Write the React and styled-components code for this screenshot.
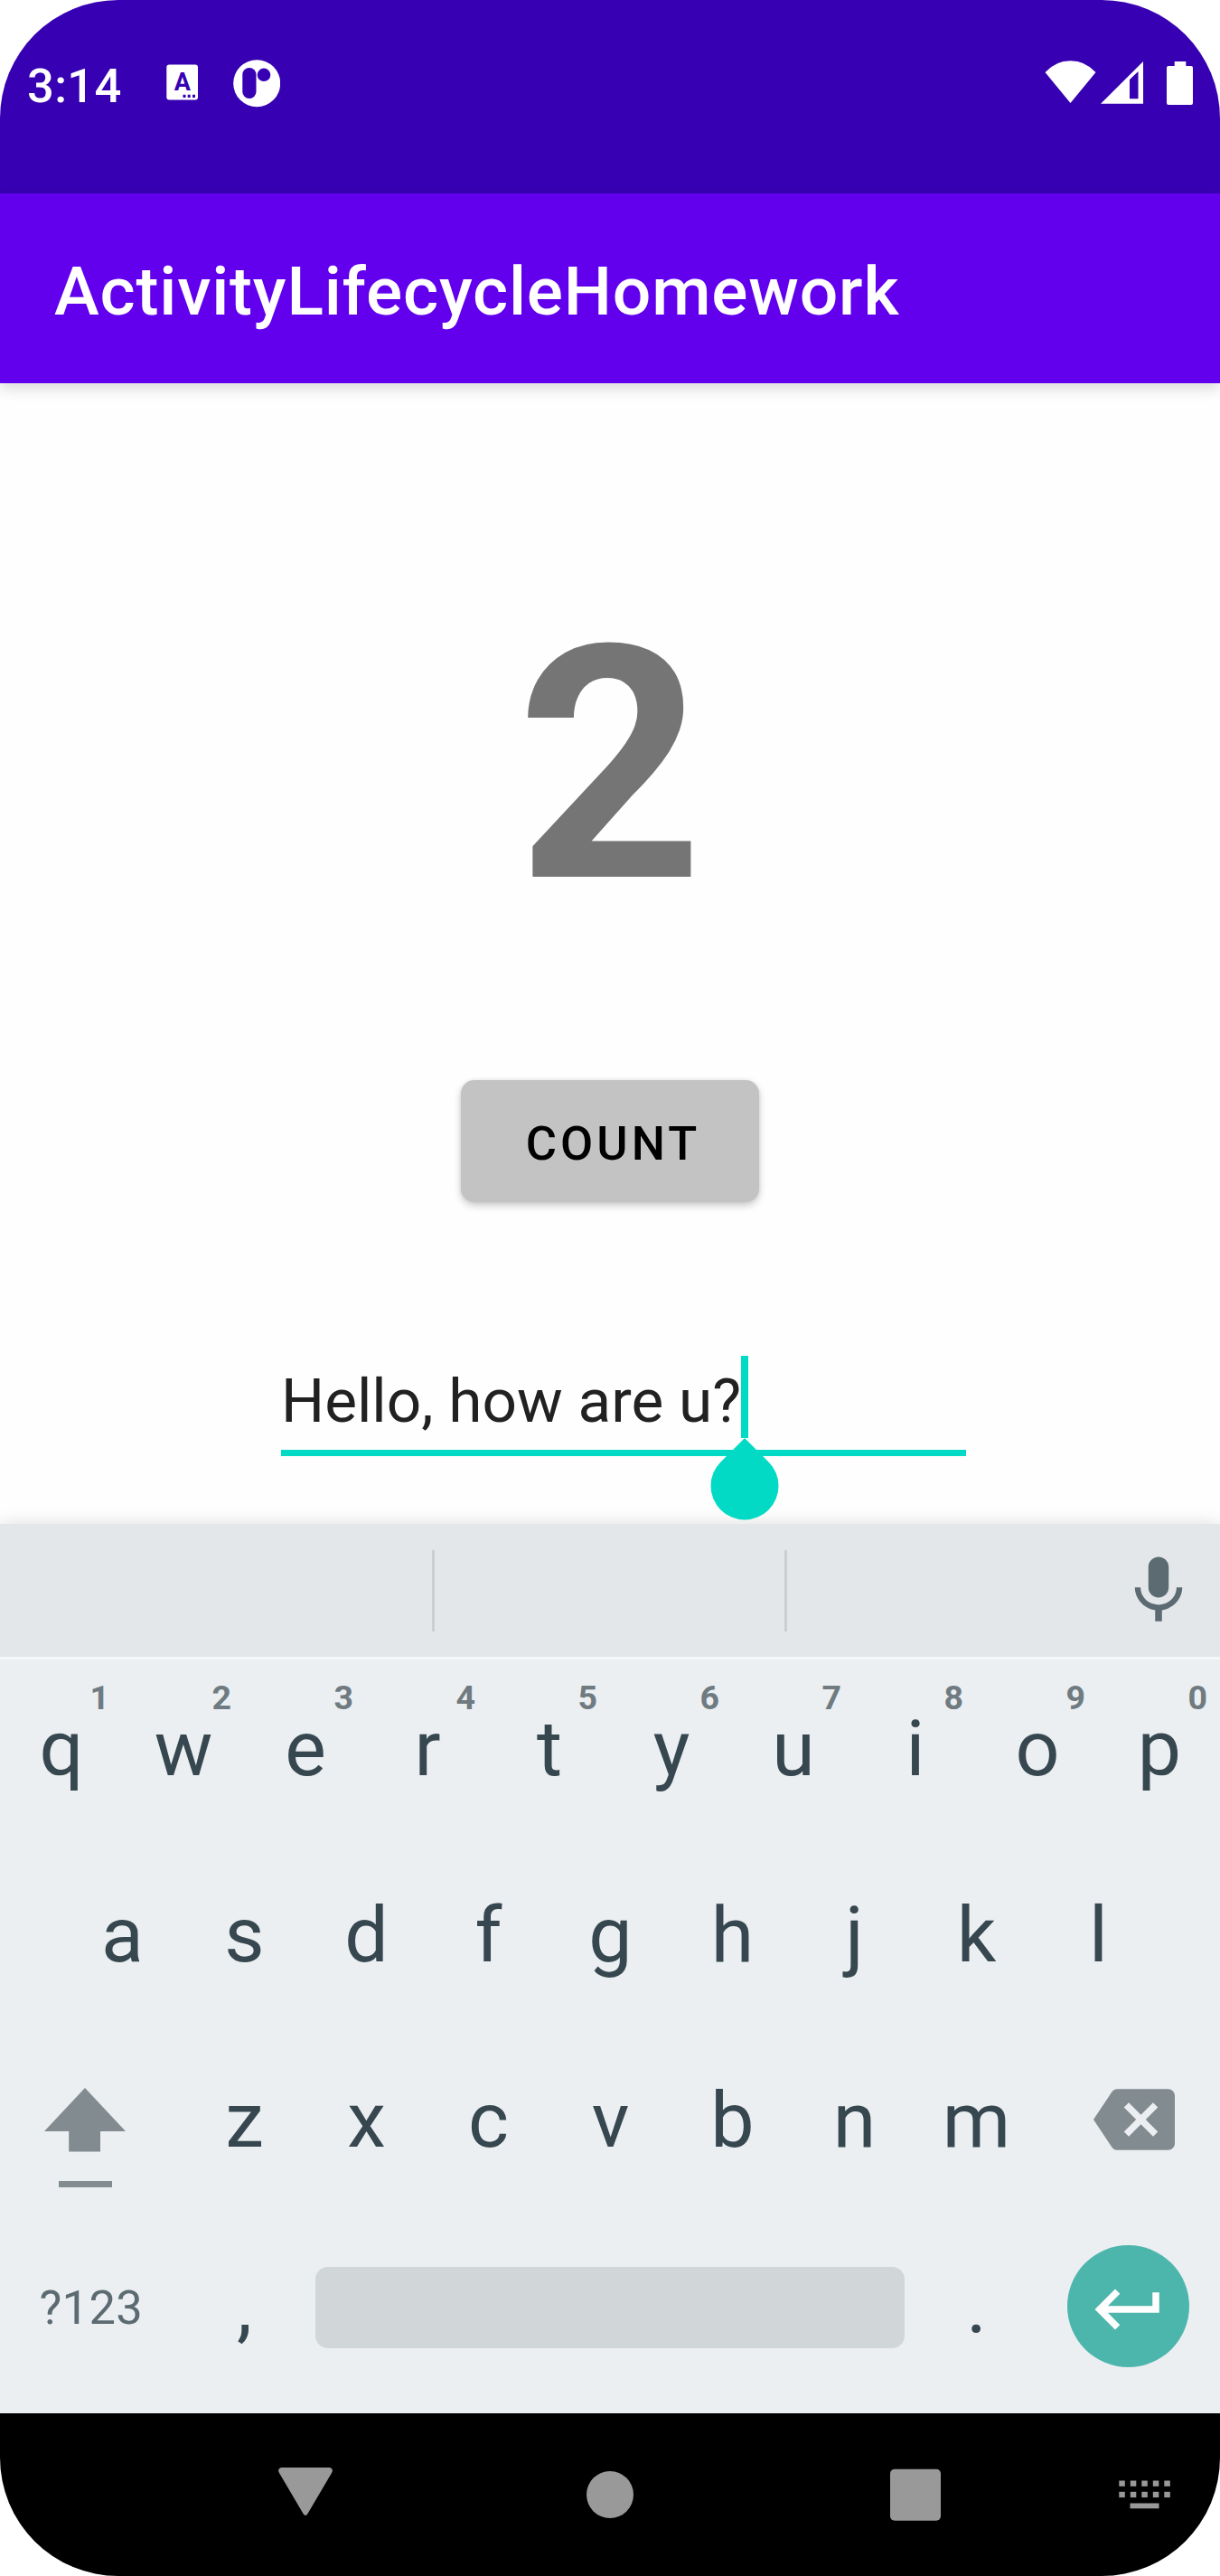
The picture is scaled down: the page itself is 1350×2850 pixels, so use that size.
import React from 'react';
import styled, { createGlobalStyle } from 'styled-components';

const GlobalStyle = createGlobalStyle`
  * { box-sizing: border-box; }
  html, body { margin: 0; padding: 0; background: #fff; }
  body { font-family: Roboto, "Liberation Sans", sans-serif; }
  svg { display: block; flex: none; }
`;

const Device = styled.div`
  width: 1350px;
  height: 2850px;
  display: flex;
  flex-direction: column;
  overflow: hidden;
  border-radius: 131px;
  background: #fefefe;
`;

const StatusBar = styled.header`
  flex: none;
  height: 214px;
  padding: 66px 30px 0 30px;
  display: flex;
  align-items: flex-start;
  justify-content: space-between;
  background: #3700b3;
  color: #fff;
`;

const StatusGroup = styled.div`
  display: flex;
  align-items: flex-start;
`;

const Clock = styled.span`
  width: 154px;
  font-size: 52.5px;
  font-weight: 500;
  line-height: 59px;
  letter-spacing: 0.3px;
`;

const AppBar = styled.div`
  flex: none;
  height: 210px;
  padding: 6px 60px 0;
  display: flex;
  align-items: center;
  background: #6200ee;
  box-shadow: 0 6px 15px rgba(0, 0, 0, 0.14);
`;

const Title = styled.h1`
  margin: 0;
  color: #fff;
  font-size: 75px;
  font-weight: 500;
  line-height: 88px;
  letter-spacing: 0.8px;
`;

const Content = styled.main`
  flex: none;
  height: 1262px;
  padding-top: 212px;
  display: flex;
  flex-direction: column;
  align-items: center;
`;

const Counter = styled.div`
  height: 422px;
  line-height: 422px;
  font-size: 360px;
  font-weight: 700;
  color: #757575;
`;

const CountButton = styled.button`
  width: 330px;
  height: 135px;
  margin-top: 137px;
  padding: 5px 0 0 7px;
  border: 0;
  border-radius: 15px;
  background: #c3c3c3;
  color: #000;
  font-family: inherit;
  font-size: 52.5px;
  font-weight: 500;
  letter-spacing: 4px;
  box-shadow: 0 4px 8px rgba(0, 0, 0, 0.2), 0 0 4px rgba(0, 0, 0, 0.08);
`;

const TextField = styled.div`
  width: 758px;
  height: 111px;
  margin: 170px 0 0 30px;
  display: flex;
  align-items: flex-start;
  border-bottom: 7px solid #03dac5;
`;

const FieldText = styled.span`
  padding-top: 8px;
  font-size: 67.5px;
  line-height: 83px;
  white-space: pre;
  color: #212121;
`;

const Caret = styled.span`
  position: relative;
  width: 8px;
  height: 91px;
  background: #03dac5;
`;

const CaretHandle = styled.svg`
  position: absolute;
  top: 91px;
  left: -34px;
`;

const Keyboard = styled.section`
  flex: none;
  height: 984px;
  display: flex;
  flex-direction: column;
  background: #ebeff2;
  box-shadow: 0 0 18px rgba(0, 0, 0, 0.13);
`;

const SuggestionStrip = styled.div`
  height: 150px;
  padding: 29px 23px 0 0;
  display: flex;
  align-items: flex-start;
  background: #e3e7ea;
  border-bottom: 3px solid #f5f7f8;
`;

const Suggestion = styled.div`
  width: ${(p) => p.$width}px;
  height: 90px;
  border-right: ${(p) => (p.$last ? '0' : '3px solid #cacfd2')};
`;

const Row = styled.div`
  height: 205.7px;
  padding: 0 ${(p) => p.$inset || 0}px;
  display: flex;
`;

const Key = styled.div`
  position: relative;
  width: ${(p) => p.$width || 135}px;
  padding-bottom: 8px;
  display: flex;
  align-items: center;
  justify-content: center;
  color: #37474f;
  font-size: 86px;
  line-height: 100px;
`;

const Letter = styled.span`
  padding-left: 1px;
`;

const Hint = styled.span`
  position: absolute;
  top: 20px;
  right: 14px;
  font-size: 37.5px;
  line-height: 44px;
  font-weight: 700;
  color: #6f7b80;
`;

const SymbolsLabel = styled.span`
  padding: 2px 1px 0 0;
  font-size: 52.5px;
  line-height: 62px;
  letter-spacing: 0.3px;
  color: #5c6b72;
`;

const SpaceBar = styled.div`
  width: 652px;
  height: 90px;
  margin-top: 2px;
  border-radius: 14px;
  background: #d1d6d9;
`;

const EnterButton = styled.div`
  width: 135px;
  height: 135px;
  padding-top: 7px;
  display: flex;
  align-items: center;
  justify-content: center;
  border-radius: 50%;
  background: #4db6ac;
`;

const ShiftIcon = styled.svg`
  margin: 38px 15px 0 0;
`;

const BackspaceIcon = styled.svg`
  margin: -3px 0 0 13px;
`;

const NavBar = styled.nav`
  flex: none;
  height: 180px;
  padding-left: 308px;
  display: flex;
  align-items: flex-start;
  background: #000;
`;

const NavIcon = styled.svg`
  margin: ${(p) => p.$top}px ${(p) => p.$gap || 0}px 0 0;
  fill: #999;
`;

const NUMBER_ROW = [
  ['q', '1'], ['w', '2'], ['e', '3'], ['r', '4'], ['t', '5'],
  ['y', '6'], ['u', '7'], ['i', '8'], ['o', '9'], ['p', '0'],
];

function StatusIcons() {
  return (
    <StatusGroup>
      <svg width="164" height="52" viewBox="1156 66 164 52" fill="#fff">
        <path d="M1184.5 114 1156.500 80Q1168 67.200 1184.500 67.200 1201 67.200 1212.500 80Z" />
        <path fillRule="evenodd" d="M1218 114.7 1265 68V114.7ZM1250 88V109.3H1259.5V79Z" />
        <path d="M1299.7 68H1312.3V73H1318q2 0 2 2V114q0 2-2 2H1293q-2 0-2-2V75q0-2 2-2H1299.7Z" />
      </svg>
    </StatusGroup>
  );
}

function NotificationIcons() {
  return (
    <svg width="126" height="53" viewBox="184 66 126 53">
      <rect x="184.3" y="71.5" width="34.7" height="39" rx="3" fill="#fff" />
      <text x="201.7" y="100.3" textAnchor="middle" fontFamily="Roboto" fontWeight="700" fontSize="27" fill="#3700b3">A</text>
      <path d="M202.5 104.7h3v3.3h-3zM207.7 104.7h3v3.3h-3zM213 104.7h3v3.3h-3z" fill="#3700b3" />
      <circle cx="284.2" cy="92.2" r="26" fill="#fff" />
      <rect x="268.3" y="75" width="15.2" height="34" rx="7.4" fill="#3700b3" />
      <circle cx="292" cy="82.8" r="7.3" fill="#3700b3" />
    </svg>
  );
}

export default function App() {
  return (
    <>
      <GlobalStyle />
      <Device>
        <StatusBar>
          <StatusGroup>
            <Clock>3:14</Clock>
            <NotificationIcons />
          </StatusGroup>
          <StatusIcons />
        </StatusBar>
        <AppBar>
          <Title>ActivityLifecycleHomework</Title>
        </AppBar>
        <Content>
          <Counter>2</Counter>
          <CountButton>COUNT</CountButton>
          <TextField>
            <FieldText>Hello, how are u?</FieldText>
            <Caret>
              <CaretHandle width="76" height="91" viewBox="0 0 76 91" fill="#03dac5">
                <path d="M38 0 64.5 26.4A37.5 37.5 0 1 1 11.5 26.4Z" />
              </CaretHandle>
            </Caret>
          </TextField>
        </Content>
        <Keyboard>
          <SuggestionStrip>
            <Suggestion $width={481} />
            <Suggestion $width={390} />
            <Suggestion $width={365.5} $last />
            <svg width="90" height="90" viewBox="0 0 24 24" fill="#5c6b72">
              <path d="M12 14c1.66 0 2.99-1.34 2.99-3L15 5c0-1.66-1.34-3-3-3S9 3.34 9 5v6c0 1.66 1.34 3 3 3zm5.3-3c0 3-2.54 5.1-5.3 5.1S6.7 14 6.7 11H5c0 3.41 2.72 6.23 6 6.72V21h2v-3.28c3.28-.48 6-3.3 6-6.72h-1.7z" />
            </svg>
          </SuggestionStrip>
          <Row>
            {NUMBER_ROW.map(([letter, digit]) => (
              <Key key={letter}>
                <Letter>{letter}</Letter>
                <Hint>{digit}</Hint>
              </Key>
            ))}
          </Row>
          <Row $inset={67.5}>
            {[...'asdfghjkl'].map((letter) => (
              <Key key={letter}>
                <Letter>{letter}</Letter>
              </Key>
            ))}
          </Row>
          <Row>
            <Key $width={202.5}>
              <ShiftIcon width="90" height="111" viewBox="0 0 90 111" fill="#828c90">
                <path d="M45 0 90 48H62V70.5H27.2V48H0Z" />
                <path d="M16 103h59v7H16z" />
              </ShiftIcon>
            </Key>
            {[...'zxcvbnm'].map((letter) => (
              <Key key={letter}>
                <Letter>{letter}</Letter>
              </Key>
            ))}
            <Key $width={202.5}>
              <BackspaceIcon width="90" height="90" viewBox="0 0 24 24" fill="#828c90">
                <path d="M22 3H7c-.69 0-1.23.35-1.59.88L0 12l5.41 8.11c.36.53.9.89 1.59.89h15c1.1 0 2-.9 2-2V5c0-1.1-.9-2-2-2zm-3 12.59L17.59 17 14 13.41 10.41 17 9 15.59 12.59 12 9 8.41 10.41 7 14 10.59 17.59 7 19 8.41 15.41 12 19 15.59z" />
              </BackspaceIcon>
            </Key>
          </Row>
          <Row>
            <Key $width={202.5}>
              <SymbolsLabel>?123</SymbolsLabel>
            </Key>
            <Key>
              <Letter>,</Letter>
            </Key>
            <Key $width={675}>
              <SpaceBar />
            </Key>
            <Key>
              <Letter>.</Letter>
            </Key>
            <Key $width={202.5}>
              <EnterButton>
                <svg width="90" height="90" viewBox="0 0 24 24" fill="#fff">
                  <path d="M19 7v4H5.83l3.58-3.59L8 6l-6 6 6 6 1.41-1.41L5.83 13H21V7z" />
                </svg>
              </EnterButton>
            </Key>
          </Row>
        </Keyboard>
        <NavBar>
          <NavIcon $top={60} $gap={281} width="60" height="54" viewBox="0 0 60 54">
            <path d="M3 0H57Q61.5 1.5 59 6L32.5 51Q30 55 27.5 51L1 6Q-1.5 1.5 3 0Z" />
          </NavIcon>
          <NavIcon $top={64} $gap={284} width="52" height="52" viewBox="0 0 52 52">
            <circle cx="26" cy="26" r="26" />
          </NavIcon>
          <NavIcon $top={61} $gap={197} width="56" height="58" viewBox="0 0 56 58">
            <rect x="0" y="0.7" width="56" height="57" rx="5" />
          </NavIcon>
          <NavIcon $top={74} width="58" height="32" viewBox="0 0 58 32">
            {[0.3, 12.8, 25.3, 37.8, 50.3].map((x) => (
              <React.Fragment key={x}>
                <rect x={x} y="0.5" width="6.5" height="6.3" />
                <rect x={x} y="12.8" width="6.5" height="6.3" />
              </React.Fragment>
            ))}
            <rect x="12.5" y="25.5" width="32" height="5.8" />
          </NavIcon>
        </NavBar>
      </Device>
    </>
  );
}
